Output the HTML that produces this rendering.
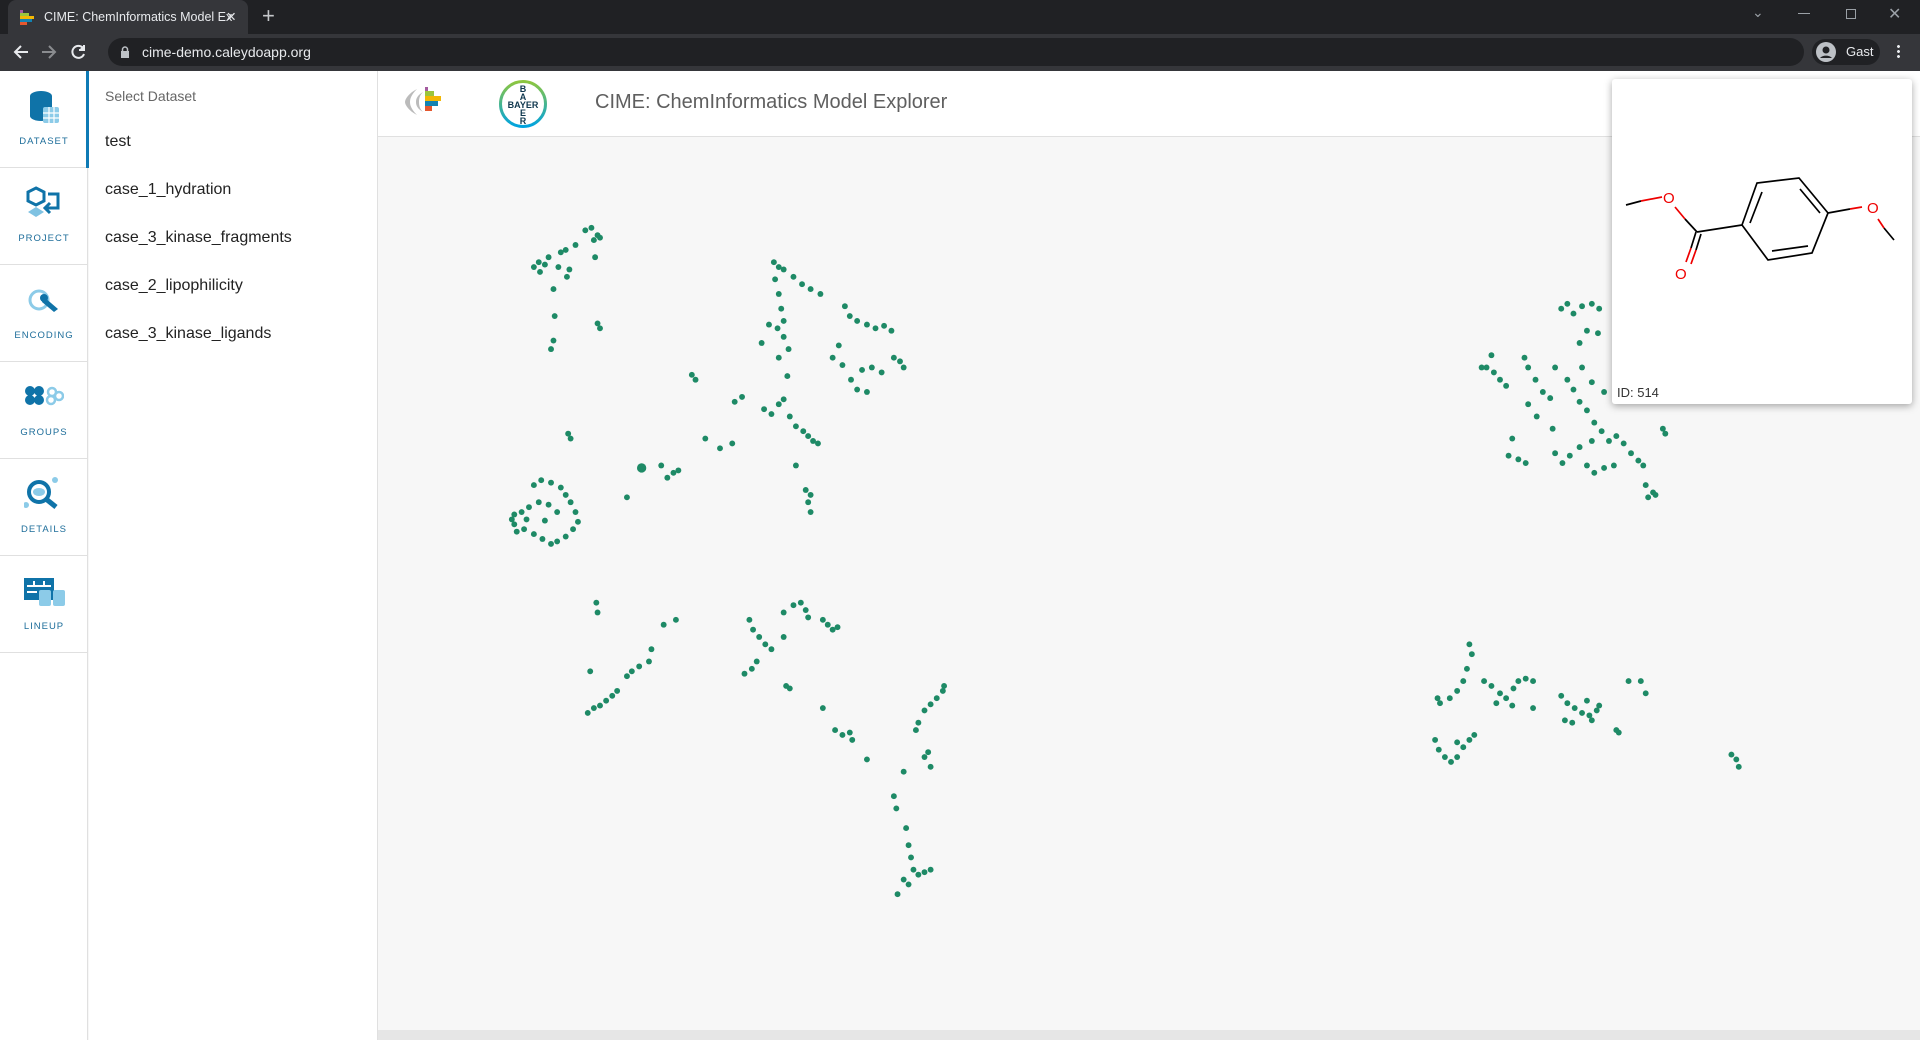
<!DOCTYPE html>
<html><head><meta charset="utf-8"><style>
*{box-sizing:border-box;margin:0;padding:0}
body{width:1920px;height:1040px;overflow:hidden;background:#f7f7f7;font-family:"Liberation Sans",sans-serif;position:relative}
.abs{position:absolute}
#tabs{left:0;top:0;width:1920px;height:34px;background:#202124}
#tab{left:8px;top:0;width:240px;height:34px;background:#35363a;border-radius:8px 8px 0 0;color:#e8eaed;font-size:12.5px;line-height:34px;padding-left:36px;white-space:nowrap}
#bar{left:0;top:34px;width:1920px;height:37px;background:#35363a}
#omni{left:108px;top:38px;width:1696px;height:28px;background:#202124;border-radius:14px;color:#e8eaed;font-size:14px;line-height:28px;padding-left:34px}
#side{left:0;top:71px;width:88px;height:969px;background:#fff;border-right:1px solid #e0e0e0}
.si{position:absolute;left:0;width:88px;height:97px;border-bottom:1px solid #e0e0e0;text-align:center;font-size:9.5px;letter-spacing:1px;color:#1d6d9a}
.si span{position:absolute;left:0;right:0;bottom:20px}
.si svg{position:absolute;left:24px;top:18px}
#list{left:89px;top:71px;width:289px;height:969px;background:#fff;border-right:1px solid #e0e0e0}
#list .h{position:absolute;left:16px;top:17px;font-size:14px;color:#666}
#list .it{position:absolute;left:16px;font-size:16px;color:#222}
#hdr{left:378px;top:71px;width:1542px;height:66px;background:#fff;border-bottom:1px solid #e0e0e0}
#title{left:595px;top:91px;font-size:20px;color:#5f5f5f}
#tip{left:1612px;top:79px;width:300px;height:325px;background:#fff;border-radius:3px;box-shadow:0 2px 8px rgba(0,0,0,.35)}
</style></head><body>
<div id="tabs" class="abs"></div>
<div id="tab" class="abs">CIME: ChemInformatics Model Ex<span style="position:absolute;left:218px;color:#e8eaed">✕</span></div>
<svg class="abs" style="left:18px;top:10px" width="18" height="16"><rect x="2" y="0" width="3" height="3" fill="#a45ba0"/><rect x="2" y="3" width="9" height="3" fill="#9bc53d"/><rect x="2" y="6" width="14" height="3" fill="#f2b705"/><rect x="2" y="9" width="12" height="3" fill="#1282b2"/><rect x="2" y="12" width="7" height="3" fill="#e4572e"/></svg>
<div class="abs" style="left:262px;top:3px;color:#c5c7ca;font-size:22px">+</div>
<div class="abs" style="left:1752px;top:4px;color:#9aa0a6;font-size:14px">⌄</div>
<div class="abs" style="left:1798px;top:13px;width:12px;height:1px;background:#9aa0a6"></div>
<div class="abs" style="left:1846px;top:9px;width:10px;height:10px;border:1px solid #9aa0a6"></div>
<div class="abs" style="left:1888px;top:4px;color:#9aa0a6;font-size:16px">✕</div>
<div id="bar" class="abs"></div>
<svg class="abs" style="left:12px;top:43px" width="80" height="18" fill="none" stroke-width="2"><path d="M16 9H3M9 3L3 9l6 6" stroke="#e8eaed"/><path d="M30 9h13M37 3l6 6-6 6" stroke="#8a8c8f"/><path d="M71 5a6 6 0 1 0 1 6" stroke="#e8eaed"/><path d="M72 2v5h-5" stroke="#e8eaed" fill="#e8eaed"/></svg>
<div id="omni" class="abs">cime-demo.caleydoapp.org</div>
<svg class="abs" style="left:120px;top:46px" width="10" height="12"><rect x="1" y="5" width="8" height="7" fill="#bdc1c6"/><path d="M2.5 5V3.5a2.5 2.5 0 0 1 5 0V5" stroke="#bdc1c6" fill="none" stroke-width="1.5"/></svg>
<div class="abs" style="left:1812px;top:39px;width:68px;height:26px;border-radius:13px;background:#202124;color:#e8eaed;font-size:13px;line-height:26px;padding-left:34px">Gast</div>
<svg class="abs" style="left:1816px;top:42px" width="20" height="20"><circle cx="10" cy="10" r="10" fill="#bdc1c6"/><circle cx="10" cy="8" r="3.5" fill="#202124"/><path d="M4 16a7 5 0 0 1 12 0z" fill="#202124"/></svg>
<div class="abs" style="left:1897px;top:44px;width:3px;height:15px;background:radial-gradient(circle,#e8eaed 1.3px,transparent 1.6px) 0 0/3px 5px"></div>

<div id="side" class="abs">
<div class="si" style="top:0;background:#fff"><svg width="40" height="40"><ellipse cx="17" cy="7" rx="11" ry="5" fill="#0f73a8"/><path d="M6 7v20a11 5 0 0 0 22 0V7" fill="#0f73a8"/><rect x="19" y="18" width="16" height="16" rx="2" fill="#8ccbe8"/><path d="M19 24h16M19 29h16M25 18v16M30 18v16" stroke="#fff" stroke-width="1.2"/></svg><span>DATASET</span></div>
<div class="si" style="top:97px"><svg width="40" height="40"><path d="M12 2l8 4v9l-8 4-8-4V6z" fill="none" stroke="#0f73a8" stroke-width="3"/><path d="M4 26l8-5 8 5-8 5z" fill="#7fc2e2"/><path d="M24 8h10v14H22M26 17l-5 5 5 5" fill="none" stroke="#0f73a8" stroke-width="3"/></svg><span>PROJECT</span></div>
<div class="si" style="top:194px"><svg width="40" height="40"><circle cx="15" cy="17" r="9" fill="none" stroke="#8ccbe8" stroke-width="3"/><path d="M20 14l14 12-4 3-12-10z" fill="#0f73a8"/><circle cx="20" cy="15" r="4" fill="#0f73a8"/></svg><span>ENCODING</span></div>
<div class="si" style="top:291px"><svg width="40" height="40"><g fill="#0f73a8"><circle cx="6" cy="11" r="5"/><circle cx="15" cy="11" r="5"/><circle cx="6" cy="20" r="5"/><circle cx="15" cy="20" r="5"/></g><g fill="none" stroke="#8ccbe8" stroke-width="2.5"><circle cx="28" cy="12" r="4"/><circle cx="27" cy="20" r="4"/><circle cx="35" cy="16" r="4"/></g></svg><span>GROUPS</span></div>
<div class="si" style="top:388px"><svg width="40" height="40"><circle cx="15" cy="15" r="10" fill="none" stroke="#0f73a8" stroke-width="4"/><ellipse cx="15" cy="15" rx="6" ry="4" fill="#8ccbe8"/><path d="M22 22l10 8" stroke="#0f73a8" stroke-width="5"/><circle cx="31" cy="3" r="3" fill="#8ccbe8"/><circle cx="2" cy="28" r="3" fill="#8ccbe8"/></svg><span>DETAILS</span></div>
<div class="si" style="top:485px"><svg width="44" height="40"><rect x="0" y="4" width="30" height="22" fill="#0f73a8"/><path d="M3 12h24M3 18h10M10 7v5M20 7v5" stroke="#fff" stroke-width="2"/><rect x="15" y="16" width="12" height="16" rx="2" fill="#8ccbe8"/><rect x="29" y="16" width="12" height="16" rx="2" fill="#8ccbe8"/></svg><span>LINEUP</span></div>
</div>
<div class="abs" style="left:86px;top:71px;width:3px;height:97px;background:#0f7ab5"></div>
<div id="list" class="abs">
<div class="h">Select Dataset</div>
<div class="it" style="top:62px">test</div>
<div class="it" style="top:110px">case_1_hydration</div>
<div class="it" style="top:158px">case_3_kinase_fragments</div>
<div class="it" style="top:206px">case_2_lipophilicity</div>
<div class="it" style="top:254px">case_3_kinase_ligands</div>
</div>
<div id="hdr" class="abs"></div>
<svg class="abs" style="left:403px;top:85px" width="50" height="34"><path d="M14 4C6 8 2 14 2 17s4 9 12 13C8 24 7 20 7 17s1-7 7-13z" fill="#bbb"/><path d="M20 7c-5 3-7 6-7 10s2 7 7 10c-3-3-4-6-4-10s1-7 4-10z" fill="#bbb"/><rect x="22" y="2" width="3" height="4" fill="#a45ba0"/><rect x="22" y="6" width="9" height="5" fill="#9bc53d"/><rect x="22" y="11" width="16" height="5" fill="#f2b705"/><rect x="22" y="16" width="13" height="5" fill="#1282b2"/><rect x="22" y="21" width="7" height="5" fill="#e4572e"/></svg>
<svg class="abs" style="left:498px;top:79px" width="50" height="50"><defs><linearGradient id="g" x1="0" y1="0" x2="0" y2="1"><stop offset="0" stop-color="#8dc63f"/><stop offset="1" stop-color="#00a3e0"/></linearGradient></defs><circle cx="25" cy="25" r="22.5" fill="#fff" stroke="url(#g)" stroke-width="3"/><g font-family="Liberation Sans" font-size="9" font-weight="bold" fill="#10384f" text-anchor="middle"><text x="25" y="13">B</text><text x="25" y="21">A</text><text x="25" y="29">BAYER</text><text x="25" y="37">E</text><text x="25" y="45">R</text></g></svg>
<div id="title" class="abs">CIME: ChemInformatics Model Explorer</div>
<div class="abs" style="left:378px;top:1030px;width:1542px;height:10px;background:#e6e6e6"></div>
<svg id="sc" class="abs" style="left:0;top:0" width="1920" height="1040" viewBox="0 0 1568 849" preserveAspectRatio="none"><circle cx="524" cy="382" r="3.8" fill="#1e8a66"/></svg>
<div id="tip" class="abs">
<svg width="300" height="300" style="position:absolute;left:0;top:0" fill="none" stroke-width="1.7">
<path d="M14 126l15-4" stroke="#000"/><path d="M29 122l21-4" stroke="#e00"/>
<path d="M63 128l10 12" stroke="#e00"/><path d="M73 140l12 13" stroke="#000"/>
<path d="M85 153l45-7M130 146l15-42 42-5 29 35-16 40-44 7zM138 144l12-31M188 110l20 24M160 172l36-5M216 134l22-4M282 161l-10-12" stroke="#000"/>
<path d="M84 153l-5 16M89 155l-5 16" stroke="#000"/><path d="M79 169l-5 14M84 171l-5 14" stroke="#e00"/>
<path d="M238 130l12-2M272 149l-6-9" stroke="#e00"/>
<g fill="#e00" stroke="none" font-family="Liberation Sans" font-size="15"><text x="51" y="124">O</text><text x="63" y="200">O</text><text x="255" y="134">O</text></g></svg>
<div style="position:absolute;left:5px;bottom:4px;font-size:13px;color:#333">ID: 514</div>
</div>
<script>
var P="478,188 483,186 488,192 485,196 490,194 470,200 462,204 458,206 448,210 440,214 436,218 445,216 456,218 465,220 463,226 452,236 453,258 452,278 450,285 488,264 490,268 486,210 441,222 632,214 636,218 640,220 648,226 655,232 662,236 670,240 633,228 636,240 638,252 640,262 635,268 628,265 622,280 640,275 644,285 636,292 643,307 690,250 694,258 700,262 708,265 715,268 722,266 728,270 685,282 680,292 688,298 704,302 712,300 720,304 700,318 708,320 735,295 738,300 730,292 695,310 565,306 568,310 600,328 606,324 624,334 630,338 636,330 640,326 645,340 650,348 656,352 660,356 664,360 668,362 576,358 588,366 598,362 464,354 466,358 540,380 545,390 550,386 554,384 512,406 650,380 658,400 662,404 660,410 662,418 436,396 442,392 450,394 458,398 462,404 466,410 470,418 472,426 468,432 462,438 455,442 450,444 443,440 436,436 428,432 420,428 418,424 420,420 426,418 432,414 440,410 448,412 455,418 445,425 430,424 422,434 487,492 488,500 482,548 480,582 485,578 490,576 495,572 500,568 504,564 512,552 516,548 522,544 530,540 532,530 542,510 552,506 612,506 615,514 620,520 625,526 630,530 618,540 614,546 608,550 640,500 648,494 654,492 658,498 660,504 672,506 676,510 680,514 684,512 640,520 642,560 645,562 672,578 682,596 688,600 694,598 696,604 708,620 738,630 755,618 760,626 758,614 750,590 755,580 760,575 765,570 770,564 771,560 748,596 730,650 732,660 740,676 742,690 744,700 746,710 750,714 755,712 760,710 742,722 733,730 738,718 1275,252 1280,248 1285,256 1292,250 1300,248 1306,252 1296,270 1290,280 1305,272 1218,290 1214,300 1220,304 1210,300 1225,310 1230,315 1245,292 1248,300 1260,320 1266,325 1280,310 1285,318 1290,328 1296,335 1302,345 1308,352 1314,360 1320,356 1326,362 1332,370 1338,376 1342,380 1300,360 1290,365 1282,372 1270,370 1276,378 1296,380 1302,386 1310,382 1318,380 1235,358 1240,375 1232,372 1246,378 1248,330 1255,340 1268,350 1344,396 1350,402 1346,406 1352,404 1358,350 1360,354 1270,300 1254,310 1292,300 1300,312 1310,320 1200,526 1202,534 1198,546 1195,556 1190,564 1184,570 1176,574 1174,570 1212,556 1218,560 1225,566 1230,570 1236,562 1240,556 1246,554 1252,556 1222,574 1235,576 1252,578 1275,568 1280,574 1286,578 1292,582 1298,584 1304,580 1296,572 1306,576 1320,596 1322,598 1278,588 1284,590 1300,588 1330,556 1340,556 1344,566 1172,604 1175,612 1180,618 1185,622 1190,618 1195,610 1200,604 1204,600 1190,606 1414,616 1418,620 1420,626";
var s="";P.split(" ").forEach(function(p){var a=p.split(",");s+='<circle cx="'+a[0]+'" cy="'+a[1]+'" r="2.4" fill="#1e8a66"/>';});
document.getElementById("sc").insertAdjacentHTML("beforeend",s);
</script>
</body></html>
